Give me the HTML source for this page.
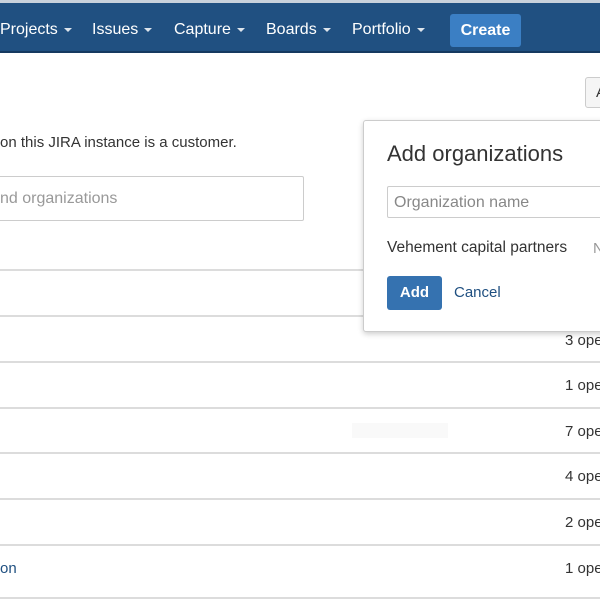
<!DOCTYPE html>
<html><head><style>
*{margin:0;padding:0;box-sizing:border-box}
body{width:600px;height:600px;overflow:hidden;background:#fff;font-family:"Liberation Sans",Arial,sans-serif;position:relative;color:#333}
.nav{position:absolute;left:0;top:0;width:600px;height:53px;background:#205081;border-top:3px solid #c9d2dc;border-bottom:2px solid #163a60}
.nav span{position:absolute;top:18px;color:#fff;font-size:16px;white-space:nowrap}
.car{display:inline-block;width:0;height:0;border-left:4px solid transparent;border-right:4px solid transparent;border-top:4px solid #fff;margin-left:6px;vertical-align:middle;opacity:.85}
.create{position:absolute;left:450px;top:11px;width:71px;height:33px;background:#3b7fc4;border-radius:3px;color:#fff;font-weight:bold;font-size:16px;text-align:center;line-height:33px}
.line{position:absolute;left:0;width:600px;height:2px;background:#dcdcdc}
.open{position:absolute;left:565px;font-size:15px;color:#333;white-space:nowrap}
.t{position:absolute;white-space:nowrap}
</style></head><body>
<div class="nav">
<span style="left:0">Projects<i class="car"></i></span>
<span style="left:92px">Issues<i class="car"></i></span>
<span style="left:174px">Capture<i class="car"></i></span>
<span style="left:266px">Boards<i class="car"></i></span>
<span style="left:352px">Portfolio<i class="car"></i></span>
<div class="create">Create</div>
</div>
<div style="position:absolute;left:585px;top:77px;width:30px;height:31px;border:1px solid #ccc;border-radius:3px;background:#f5f5f5"><span style="position:absolute;left:10px;top:6px;font-size:15px">A</span></div>
<div class="t" style="left:0;top:134px;font-size:15px">on this JIRA instance is a customer.</div>
<div style="position:absolute;left:-10px;top:176px;width:314px;height:45px;border:1px solid #ccc;border-radius:2px"></div>
<div class="t" style="left:0;top:190px;font-size:16px;color:#999">nd organizations</div>
<div class="line" style="top:269px"></div>
<div class="line" style="top:315px"></div>
<div class="line" style="top:361px"></div>
<div class="line" style="top:407px"></div>
<div class="line" style="top:452px"></div>
<div class="line" style="top:498px"></div>
<div class="line" style="top:544px"></div>
<div class="line" style="top:597px"></div>
<div class="open" style="top:332px">3 ope</div>
<div class="open" style="top:377px">1 ope</div>
<div class="open" style="top:423px">7 ope</div>
<div class="open" style="top:468px">4 ope</div>
<div class="open" style="top:514px">2 ope</div>
<div class="open" style="top:560px">1 ope</div>
<div style="position:absolute;left:352px;top:423px;width:96px;height:15px;background:#f9f9f9"></div>
<div class="t" style="left:0;top:560px;font-size:15px;color:#205081">on</div>
<div style="position:absolute;left:363px;top:120px;width:260px;height:212px;background:#fff;border:1px solid #ccc;border-radius:3px;box-shadow:0 2px 6px rgba(0,0,0,.2)">
<div class="t" style="left:23px;top:20px;font-size:22px;color:#333">Add organizations</div>
<div style="position:absolute;left:23px;top:65px;width:240px;height:32px;border:1px solid #ccc;border-radius:2px"></div>
<div class="t" style="left:30px;top:73px;font-size:16px;color:#888">Organization name</div>
<div class="t" style="left:23px;top:118px;font-size:15.5px;color:#333">Vehement capital partners</div>
<div class="t" style="left:229px;top:119px;font-size:15px;color:#999">N</div>
<div style="position:absolute;left:23px;top:155px;width:55px;height:34px;background:#3572b0;border-radius:3px;color:#fff;font-weight:bold;font-size:15px;text-align:center;line-height:34px">Add</div>
<div class="t" style="left:90px;top:163px;font-size:15px;color:#205081">Cancel</div>
</div>
</body></html>
